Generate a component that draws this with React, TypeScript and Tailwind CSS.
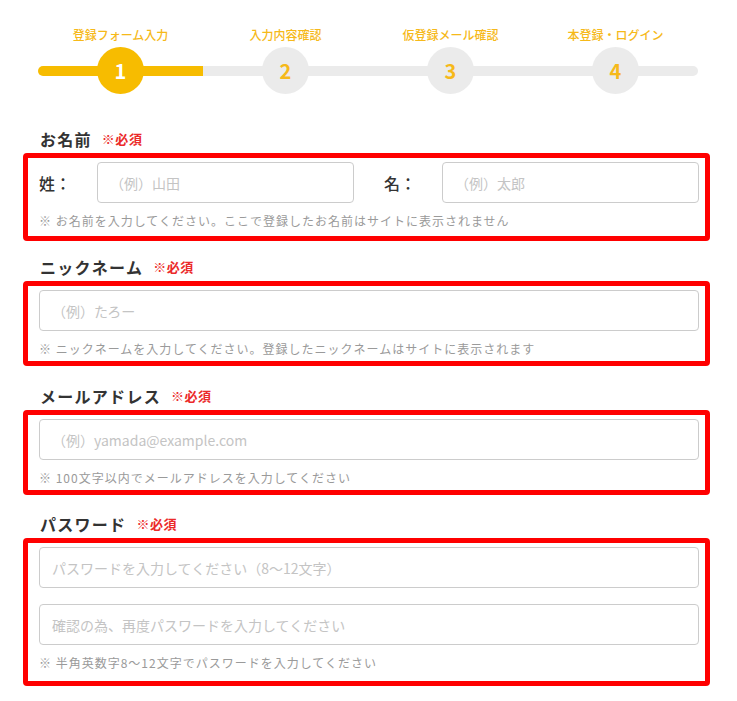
import React from 'react';

const steps = [
  { label: '登録フォーム入力', num: 1 },
  { label: '入力内容確認', num: 2 },
  { label: '仮登録メール確認', num: 3 },
  { label: '本登録・ログイン', num: 4 },
];

function Stepper({ current }: { current: number }) {
  return (
    <div className="ml-[15px] w-[660px] grid grid-cols-4">
      {steps.map((s, i) => {
        const active = s.num === current;
        const done = s.num <= current;
        return (
          <div key={s.num} className="flex flex-col items-center">
            <p className="text-[12px] leading-[18px] font-medium text-[#f6b91a] mb-[3px]">{s.label}</p>
            <div className="relative w-full h-[47px] flex items-center justify-center">
              {/* track segment */}
              <div
                className={
                  'absolute inset-x-0 top-1/2 -translate-y-1/2 h-[10px] ' +
                  (done ? 'bg-[#f7bc00] ' : 'bg-[#ebebeb] ') +
                  (i === 0 ? 'rounded-l-full ' : '') +
                  (i === steps.length - 1 ? 'rounded-r-full' : '')
                }
              />
              <div
                className={
                  'relative w-[47px] h-[47px] rounded-full flex items-center justify-center text-[20px] font-bold ' +
                  (active ? 'bg-[#f7bc00] text-white' : 'bg-[#ebebeb] text-[#f6b91a]')
                }
              >
                {s.num}
              </div>
            </div>
          </div>
        );
      })}
    </div>
  );
}

function Heading({ children }: { children: React.ReactNode }) {
  return (
    <div className="flex items-center pl-[17px] mb-[2px] h-6">
      <h2 className="text-[16px] leading-6 font-bold tracking-[0.08em] text-[#333]">{children}</h2>
      <span className="ml-[10px] text-[13px] font-bold tracking-[0.04em] text-[#eb2a2a]">※必須</span>
    </div>
  );
}

function Field({ placeholder, className = '' }: { placeholder: string; className?: string }) {
  return (
    <input
      type="text"
      placeholder={placeholder}
      className={
        'h-[41px] w-full rounded-[4px] border border-[#cccccc] bg-white px-3 text-[14px] text-[#333] placeholder:text-[#c4c4c4] outline-none ' +
        className
      }
    />
  );
}

function Hint({ children }: { children: React.ReactNode }) {
  return <p className="mt-[9px] text-[12px] leading-[18px] tracking-[1px] text-[#9a9a9a]">{children}</p>;
}

function RedBox({ children, pb }: { children: React.ReactNode; pb: string }) {
  return (
    <div className={'border-[5px] border-[#ff0000] rounded-[4px] pt-[4px] pl-[11px] pr-[6px] ' + pb}>{children}</div>
  );
}

export default function App() {
  return (
    <div className="w-[737px] h-[701px] bg-white pt-[26px] font-['Noto_Sans_CJK_JP','Noto_Sans',sans-serif]">
      <div className="w-[687px] ml-[23px]">
        <Stepper current={1} />

        {/* ── お名前 ── */}
        <section className="mt-[33px]">
          <Heading>お名前</Heading>
          <RedBox pb="pb-[6px]">
            <div className="grid grid-cols-2 gap-[30px]">
              <div className="flex items-center">
                <span className="w-[58px] shrink-0 text-[16px] font-medium text-[#333]">姓：</span>
                <Field placeholder="（例）山田" />
              </div>
              <div className="flex items-center">
                <span className="w-[58px] shrink-0 text-[16px] font-medium text-[#333]">名：</span>
                <Field placeholder="（例）太郎" />
              </div>
            </div>
            <Hint>※ お名前を入力してください。ここで登録したお名前はサイトに表示されません</Hint>
          </RedBox>
        </section>

        {/* ── ニックネーム ── */}
        <section className="mt-[14px]">
          <Heading>ニックネーム</Heading>
          <RedBox pb="pb-[3px]">
            <Field placeholder="（例）たろー" />
            <Hint>※ ニックネームを入力してください。登録したニックネームはサイトに表示されます</Hint>
          </RedBox>
        </section>

        {/* ── メールアドレス ── */}
        <section className="mt-[18px]">
          <Heading>メールアドレス</Heading>
          <RedBox pb="pb-[3px]">
            <Field placeholder="（例）yamada@example.com" />
            <Hint>※ 100文字以内でメールアドレスを入力してください</Hint>
          </RedBox>
        </section>

        {/* ── パスワード ── */}
        <section className="mt-[17px]">
          <Heading>パスワード</Heading>
          <RedBox pb="pb-[9px]">
            <Field placeholder="パスワードを入力してください（8〜12文字）" />
            <Field placeholder="確認の為、再度パスワードを入力してください" className="mt-4" />
            <Hint>※ 半角英数字8〜12文字でパスワードを入力してください</Hint>
          </RedBox>
        </section>
      </div>
    </div>
  );
}
